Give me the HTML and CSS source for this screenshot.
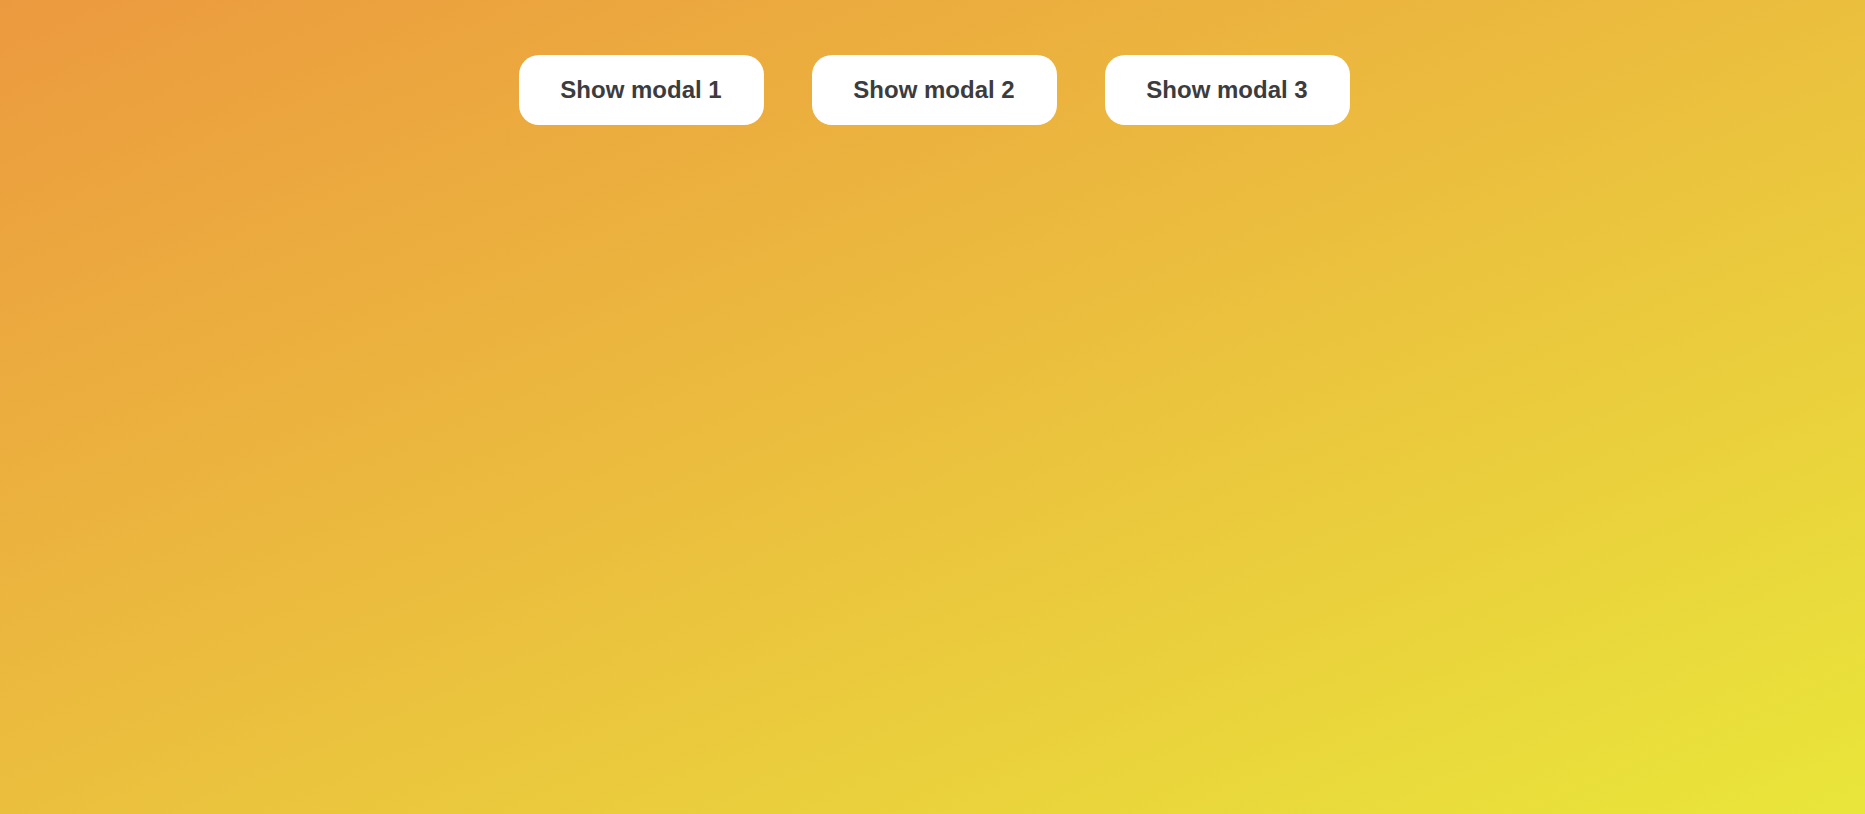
FILE: index.html
```html
<!DOCTYPE html>
<html>
<head>
<meta charset="utf-8">
<link rel="stylesheet" href="styles.css">
</head>
<body>
<div class="bar">
  <button class="btn">Show modal 1</button>
  <button class="btn">Show modal 2</button>
  <button class="btn">Show modal 3</button>
</div>
</body>
</html>
```
FILE: styles.css
```css
html, body {
  margin: 0;
  height: 100%;
}
body {
  background: linear-gradient(to bottom right, #ec9a3f 0%, #ebbf3e 50%, #e9e63a 100%);
  font-family: "Liberation Sans", Arial, sans-serif;
}
.bar {
  display: flex;
  justify-content: center;
  gap: 48px;
  padding-top: 55px;
  padding-left: 3px;
}
.btn {
  width: 245px;
  height: 70px;
  border: none;
  border-radius: 20px;
  background: #fff;
  color: #3c3c3f;
  font-family: "Liberation Sans", Arial, sans-serif;
  font-weight: bold;
  font-size: 24px;
  padding: 0;
  cursor: pointer;
}
```
